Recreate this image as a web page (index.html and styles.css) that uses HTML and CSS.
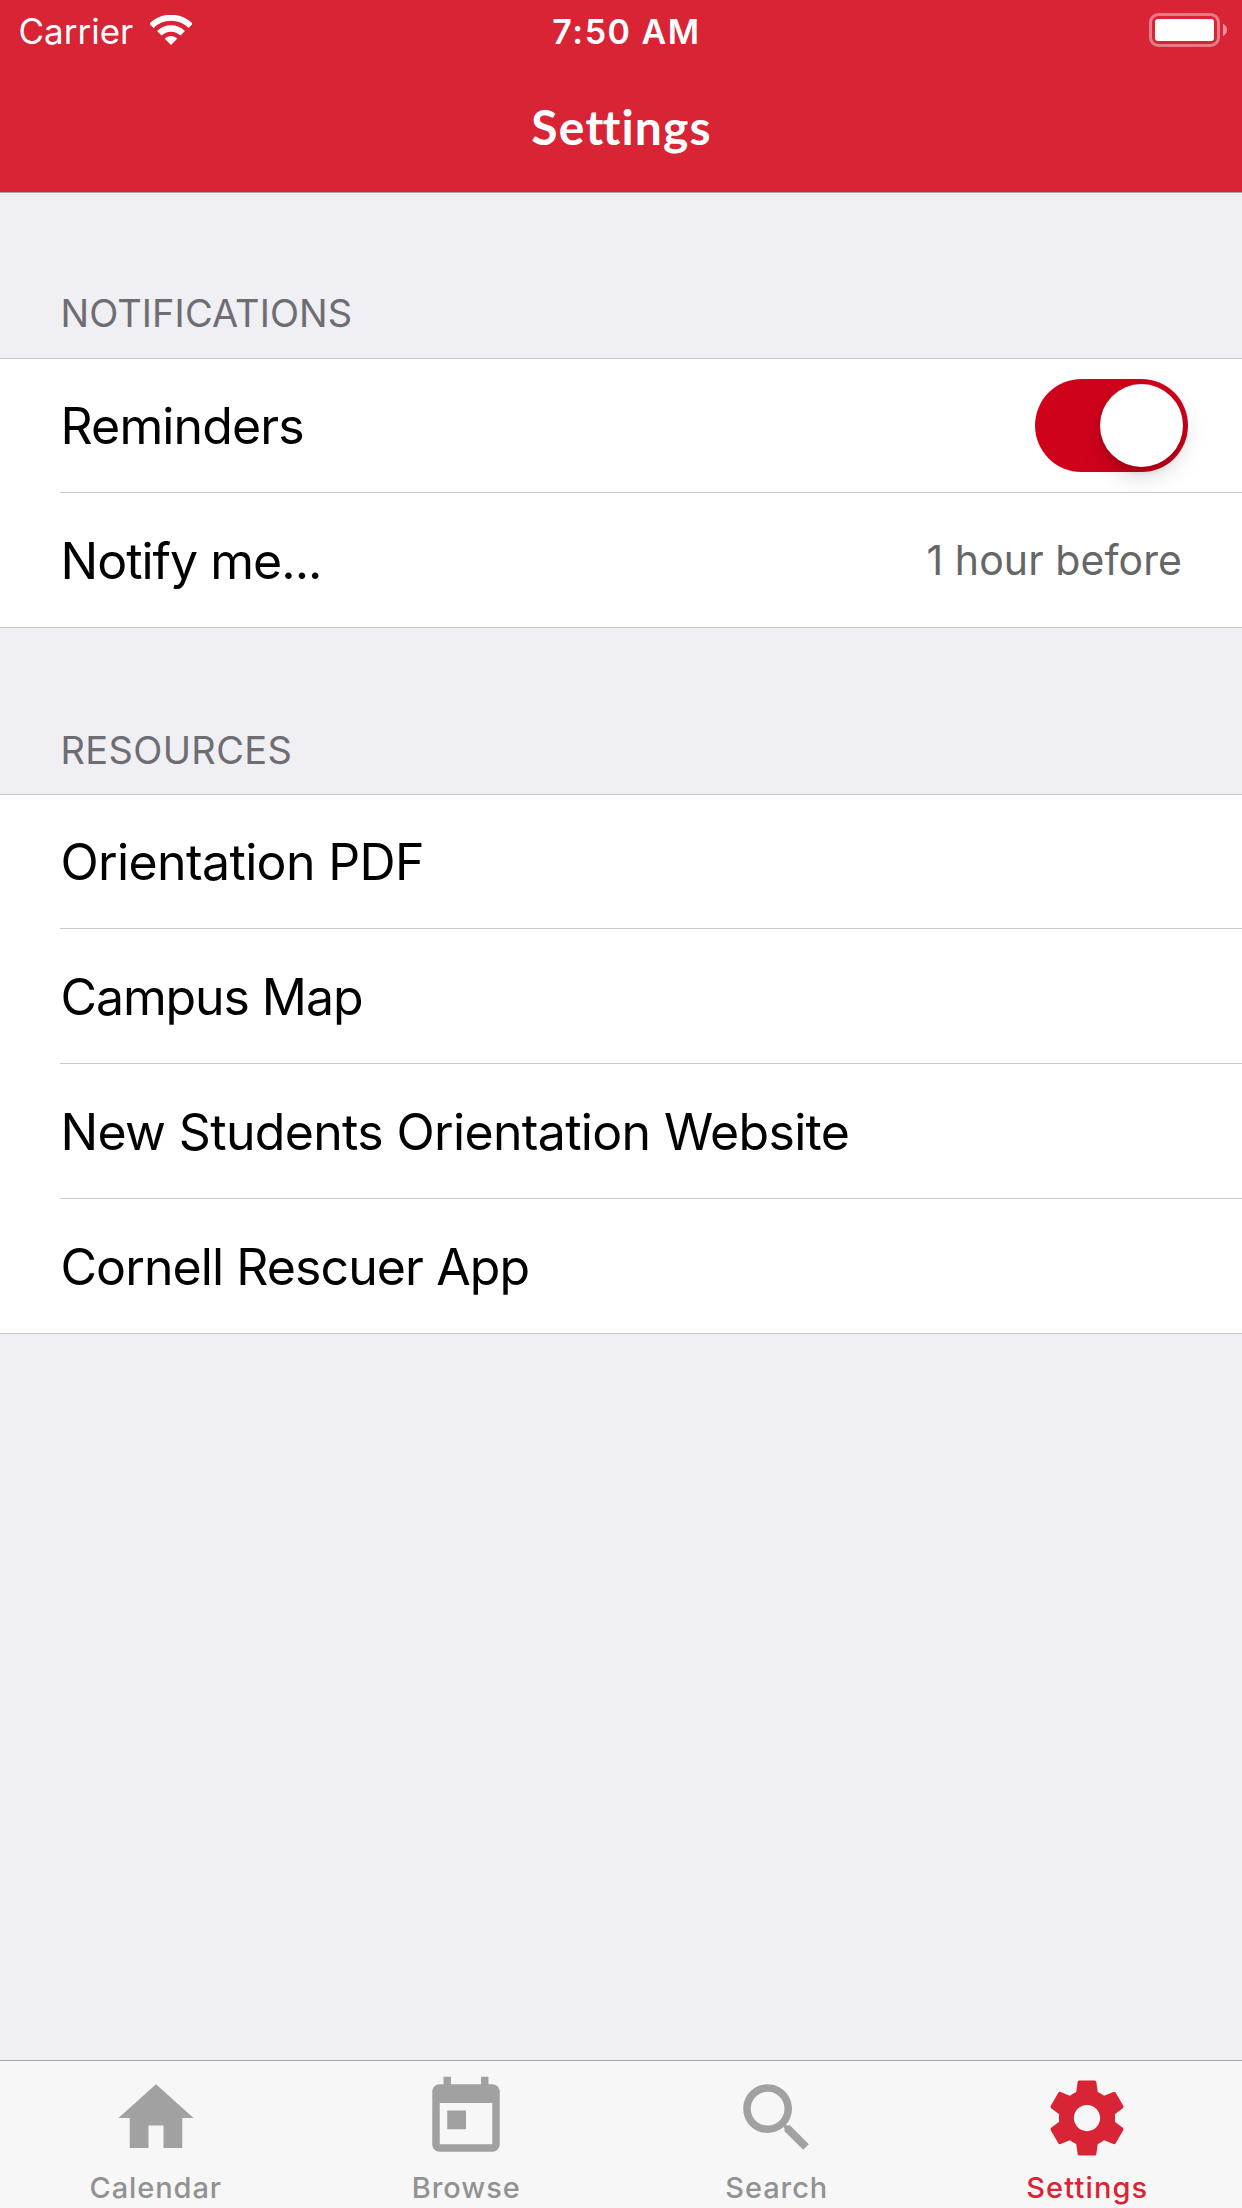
FILE: index.html
```html
<!DOCTYPE html>
<html lang="en">
<head>
<meta charset="utf-8">
<title>Settings</title>
<link rel="stylesheet" href="styles.css">
</head>
<body>
<div class="screen">
  <header class="navbar">
    <div class="status">
      <div class="status-left">
        <span class="carrier">Carrier</span>
        <svg class="wifi" width="42" height="30" viewBox="0 0 42 30">
          <path d="M1.4 10.2A27.7 27.7 0 0 1 40.6 10.2" transform="translate(0 .6)" fill="none" stroke="#fff" stroke-width="6"/>
          <path d="M9.3 18.3A16.5 16.5 0 0 1 32.7 18.3" fill="none" stroke="#fff" stroke-width="6.4"/>
          <path d="M21 30L14.6 23.6A9.2 9.2 0 0 1 27.4 23.6Z" fill="#fff"/>
        </svg>
      </div>
      <span class="time">7:50 AM</span>
      <svg class="battery" width="78" height="34" viewBox="0 0 78 34">
        <rect x="1.5" y="1.5" width="68" height="31" rx="8" fill="none" stroke="#fff" stroke-opacity=".4" stroke-width="3"/>
        <rect x="6" y="6" width="59" height="22" rx="3" fill="#fff"/>
        <path d="M74 10.8Q78 13 78 17T74 23.2Z" fill="#fff" fill-opacity=".5"/>
      </svg>
    </div>
    <h1 class="title">Se<span class="tight">t</span>tings</h1>
  </header>

  <main class="content">
    <h2 class="group-title">NOTIFICATIONS</h2>
    <ul class="group">
      <li class="row"><span class="t-reminders">Reminders</span><span class="switch"><span class="knob"></span></span></li>
      <li class="row"><span class="t-notify">Notify me...</span><span class="detail">1 hour before</span></li>
    </ul>
    <h2 class="group-title resources">RESOURCES</h2>
    <ul class="group">
      <li class="row"><span class="t-pdf">Orientation PDF</span></li>
      <li class="row"><span class="t-map">Campus Map</span></li>
      <li class="row"><span class="t-site">New Students Orientation Website</span></li>
      <li class="row"><span class="t-app">Cornell Rescuer App</span></li>
    </ul>
  </main>

  <nav class="tabbar">
    <div class="tab">
      <svg width="90" height="90" viewBox="0 0 24 24"><path d="M10 20v-6h4v6h5v-8h3L12 3 2 12h3v8z"/></svg>
      <span>Calendar</span>
    </div>
    <div class="tab">
      <svg width="90" height="90" viewBox="0 0 24 24"><path d="M19 3h-1V1h-2v2H8V1H6v2H5c-1.11 0-1.99.9-1.99 2L3 19c0 1.1.89 2 2 2h14c1.1 0 2-.9 2-2V5c0-1.1-.9-2-2-2zm0 16H5V8h14v11zM7 10h5v5H7z"/></svg>
      <span>Browse</span>
    </div>
    <div class="tab">
      <svg width="90" height="90" viewBox="0 0 24 24"><path d="M15.5 14h-.79l-.28-.27C15.41 12.59 16 11.11 16 9.5 16 5.91 13.09 3 9.5 3S3 5.91 3 9.5 5.91 16 9.5 16c1.61 0 3.09-.59 4.23-1.57l.27.28v.79l5 4.99L20.49 19l-4.99-5zm-6 0C7.01 14 5 11.99 5 9.5S7.01 5 9.5 5 14 7.01 14 9.5 11.99 14 9.5 14z"/></svg>
      <span>Search</span>
    </div>
    <div class="tab active">
      <svg width="90" height="90" viewBox="0 0 24 24"><path d="M19.43 12.98c.04-.32.07-.64.07-.98s-.03-.66-.07-.98l2.11-1.65c.19-.15.24-.42.12-.64l-2-3.46c-.12-.22-.39-.3-.61-.22l-2.49 1c-.52-.4-1.08-.73-1.69-.98l-.38-2.65C14.46 2.18 14.25 2 14 2h-4c-.25 0-.46.18-.49.42l-.38 2.65c-.61.25-1.17.59-1.69.98l-2.49-1c-.23-.09-.49 0-.61.22l-2 3.46c-.13.22-.07.49.12.64l2.11 1.65c-.04.32-.07.65-.07.98s.03.66.07.98l-2.11 1.65c-.19.15-.24.42-.12.64l2 3.46c.12.22.39.3.61.22l2.49-1c.52.4 1.08.73 1.69.98l.38 2.65c.03.24.24.42.49.42h4c.25 0 .46-.18.49-.42l.38-2.65c.61-.25 1.17-.59 1.69-.98l2.49 1c.23.09.49 0 .61-.22l2-3.46c.12-.22.07-.49-.12-.64l-2.11-1.65zM12 15.5c-1.93 0-3.5-1.57-3.5-3.5s1.57-3.5 3.5-3.5 3.5 1.57 3.5 3.5-1.57 3.5-3.5 3.5z"/></svg>
      <span>Settings</span>
    </div>
  </nav>
</div>
</body>
</html>
```
FILE: styles.css
```css
* { box-sizing: border-box; }

body {
  margin: 0;
  background: #efeff4;
  font-family: Inter, "Liberation Sans", sans-serif;
  color: #000;
}

.screen {
  display: flex;
  flex-direction: column;
  width: 1242px;
  height: 2208px;
  overflow: hidden;
}

/* Status bar and title */
.navbar {
  flex: none;
  height: 193px;
  background: #d82435;
  border-bottom: 1px solid #a9a7aa;
  color: #fff;
}

.status {
  display: grid;
  grid-template-columns: 1fr auto 1fr;
  height: 62px;
  line-height: 62px;
}

.status-left {
  display: flex;
  align-items: flex-start;
  padding-left: 18.5px;
}

.carrier { width: 131.5px; font-size: 35px; }
.wifi { margin-top: 15px; }

.time {
  padding-left: 11px;
  font-size: 34px;
  font-weight: 600;
  line-height: 64px;
  letter-spacing: 1.5px;
}

.battery {
  justify-self: end;
  margin: 13px 15px 0 0;
}

.title {
  margin: 0;
  padding-left: 1px;
  font: 700 48px/129px Lato, "Open Sans", sans-serif;
  letter-spacing: 1.15px;
  text-align: center;
}

.tight { letter-spacing: -1px; }

/* Grouped table */
.content { flex: 1; }

.group-title {
  height: 165px;
  margin: 0;
  padding: 97px 0 0 60.5px;
  font-size: 38px;
  font-weight: 400;
  line-height: 46px;
  letter-spacing: .08px;
  color: #6d6d72;
}

.group-title.resources {
  height: 166px;
  padding-top: 99px;
  letter-spacing: .37px;
}

.group {
  margin: 0;
  padding: 0 0 0 60px;
  list-style: none;
  background: #fff;
  border-top: 1px solid #c8c7cc;
  border-bottom: 1px solid #c8c7cc;
}

.row {
  display: flex;
  align-items: center;
  justify-content: space-between;
  height: 134px;
  padding-top: 2px;
  padding-left: .5px;
  font-size: 50px;
}

.row:first-child { height: 133px; padding-top: 1px; }

.row + .row {
  height: 135px;
  padding-top: 2px;
  border-top: 1px solid #c8c7cc;
}

.t-reminders { letter-spacing: -.85px; }
.t-notify { letter-spacing: -1px; }
.t-pdf { letter-spacing: -.63px; }
.t-map { letter-spacing: -1.1px; }
.t-site { letter-spacing: -.66px; }
.t-app { letter-spacing: -.91px; }

.detail {
  padding: 0 60px 2px 0;
  font-size: 41px;
  letter-spacing: .08px;
  color: #666;
}

.switch {
  display: flex;
  justify-content: flex-end;
  width: 153px;
  height: 93px;
  margin: 0 54px 1px 0;
  padding: 5px 5px 0 0;
  border-radius: 47px;
  background: #d0021b;
}

.knob {
  width: 83px;
  height: 83px;
  border-radius: 50%;
  background: #fff;
  box-shadow: 0 9px 24px rgba(0, 0, 0, .15), 0 6px 6px rgba(0, 0, 0, .1);
}

/* Tab bar */
.tabbar {
  display: flex;
  flex: none;
  height: 148px;
  background: #f7f7f7;
  border-top: 1px solid #a9a7ad;
}

.tab {
  display: flex;
  flex: 1;
  flex-direction: column;
  align-items: center;
  gap: 7px;
  padding: 12px 0 0 1px;
  font-size: 29px;
  font-weight: 500;
  line-height: 35px;
  letter-spacing: .9px;
  color: #929292;
}

.tab svg { flex: none; fill: #a1a1a1; }
.tab.active { color: #d82435; letter-spacing: 1.15px; }
.tab.active svg { fill: #d82435; }
```
